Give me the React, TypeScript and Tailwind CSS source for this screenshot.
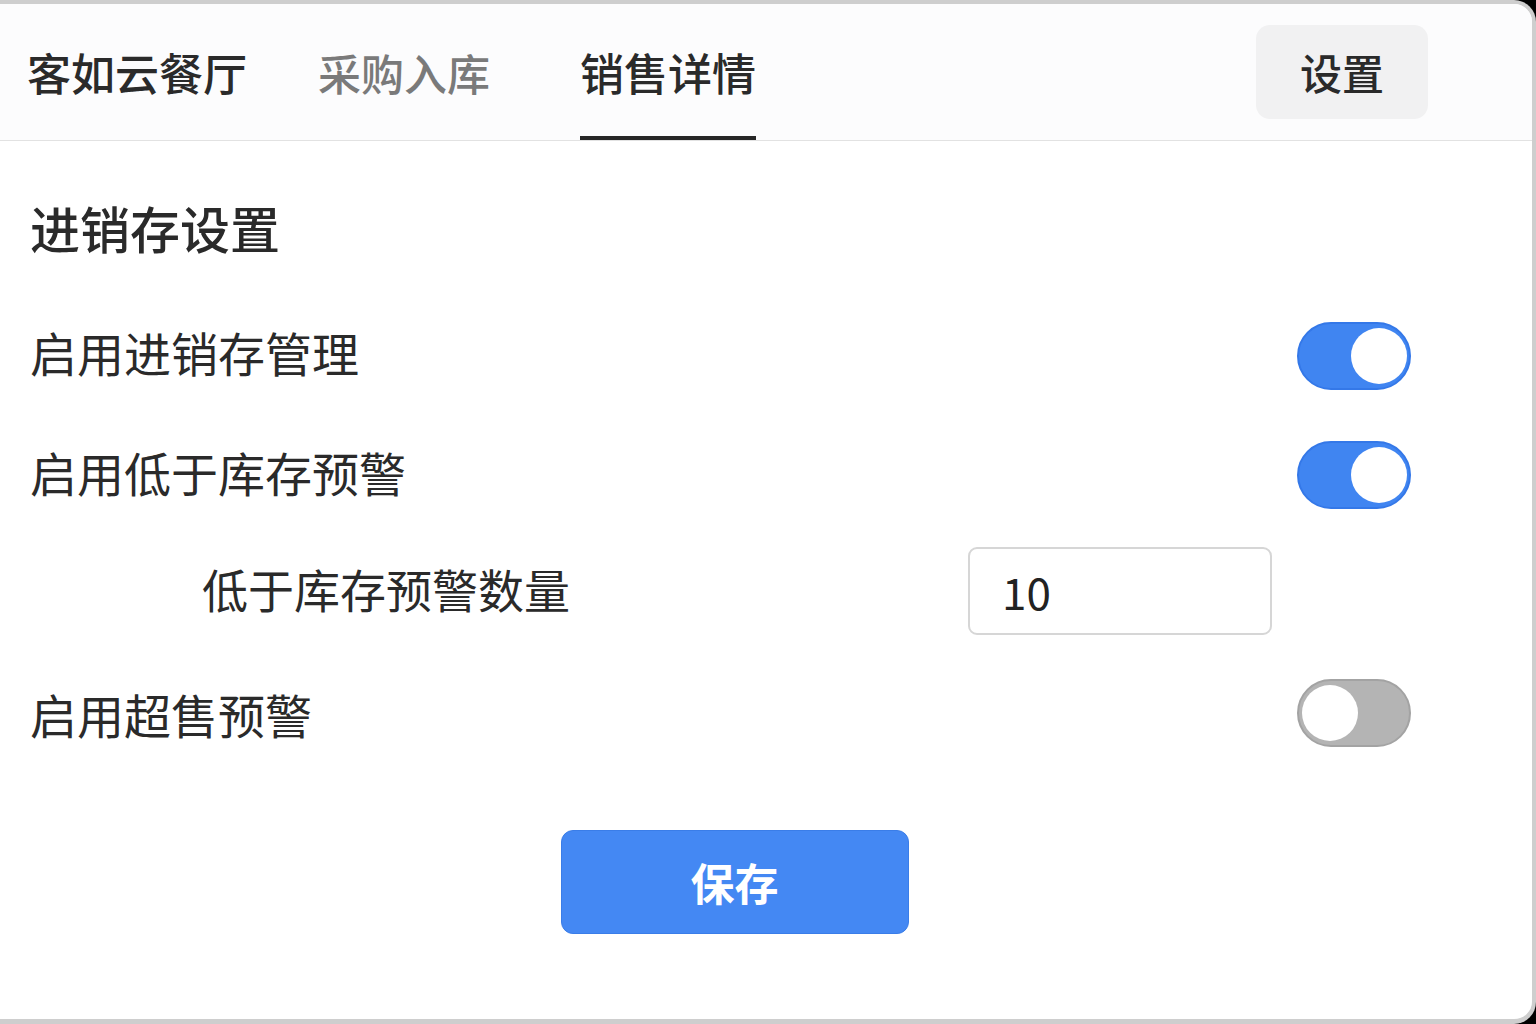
import React from "react";

const FONT = "font-['Noto_Sans_CJK_SC','Noto_Sans',sans-serif]";

function Toggle({ on }: { on: boolean }) {
  return (
    <div
      className={
        on
          ? "flex h-[68px] w-[114px] items-center justify-end rounded-full border-2 border-[#3478e8] bg-[#4085f1] pr-[2px]"
          : "flex h-[68px] w-[114px] items-center justify-start rounded-full border-2 border-[#a3a3a3] bg-[#b4b4b4] pl-[3px]"
      }
    >
      <div className="h-[56px] w-[56px] rounded-full bg-white" />
    </div>
  );
}

export default function App() {
  return (
    <div className={`h-[1024px] w-[1536px] bg-black ${FONT}`}>
      <div className="flex h-full w-full flex-col overflow-hidden rounded-r-[22px] border-t-4 border-r-4 border-b-[5px] border-[#cecece] bg-white">
        {/* Header */}
        <div className="flex h-[137px] shrink-0 items-stretch border-b border-[#e2e2e2] bg-[#fcfcfd] pl-[27px] pr-[104px]">
          <div className="flex items-center text-[44px] font-medium leading-none text-[#2a2a2a]">
            客如云餐厅
          </div>
          <div className="ml-[71px] flex items-center text-[43px] font-medium leading-none text-[#7a7a7a]">
            采购入库
          </div>
          <div className="ml-[90px] flex flex-col">
            <div className="flex flex-1 items-center pt-[4px] text-[44px] font-medium leading-none text-[#2a2a2a]">
              销售详情
            </div>
            <div className="h-[4px] bg-[#262626]" />
          </div>
          <div className="flex-1" />
          <div className="flex items-center">
            <div className="flex h-[94px] w-[172px] items-center justify-center rounded-[14px] bg-[#f1f1f2] text-[42px] font-medium leading-none text-[#2a2a2a]">
              设置
            </div>
          </div>
        </div>

        {/* Content */}
        <div className="flex flex-col pl-[30px] pr-[121px] text-[#2a2a2a]">
          <div className="h-[155px] pt-[61px]">
            <div className="text-[50px] font-medium leading-[50px]">进销存设置</div>
          </div>

          <div className="flex h-[119px] items-center justify-between">
            <div className="pb-[9px] text-[47px] leading-none">启用进销存管理</div>
            <Toggle on={true} />
          </div>

          <div className="flex h-[119px] items-center justify-between">
            <div className="pb-[6px] text-[47px] leading-none">启用低于库存预警</div>
            <Toggle on={true} />
          </div>

          <div className="flex h-[119px] items-center justify-between pb-[5px]">
            <div className="pb-[6px] pl-[172px] text-[46px] leading-none">低于库存预警数量</div>
            <div className="mr-[139px] flex h-[88px] w-[304px] items-center rounded-[9px] border-2 border-[#d6d6d6] bg-white pl-[32px] text-[44px] leading-none text-[#222]">
              10
            </div>
          </div>

          <div className="flex h-[120px] items-center justify-between">
            <div className="text-[47px] leading-none">启用超售预警</div>
            <Toggle on={false} />
          </div>

          <div className="mt-[57px] flex justify-center pl-[28px]">
            <div className="flex h-[104px] w-[348px] items-center justify-center rounded-[12px] border border-[#3a7de8] bg-[#4488f3] text-[44px] font-semibold leading-none text-white">
              保存
            </div>
          </div>
        </div>
      </div>
    </div>
  );
}
